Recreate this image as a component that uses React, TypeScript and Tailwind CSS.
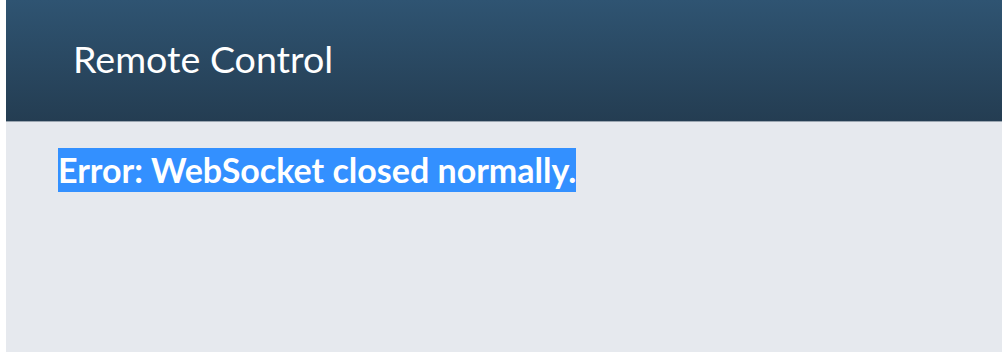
export default function App() {
  return (
    <div className="h-[352px] w-full bg-white pl-[6px] font-['Lato','Liberation_Sans',sans-serif]">
      <div className="flex h-full flex-col bg-[#e6e9ee]">
        <header className="flex h-[122px] items-center border-b border-[#9aa5b0] bg-gradient-to-b from-[#2f5472] to-[#243d52] pl-[67px]">
          <h1 className="mb-[4px] text-[37.6px] leading-none text-white">Remote Control</h1>
        </header>
        <main className="pl-[52px] pt-[26px]">
          <span className="inline-block bg-[#3390ff] text-[34px] font-bold leading-[44px] text-white">
            Error: WebSocket closed normally.
          </span>
        </main>
      </div>
    </div>
  );
}
